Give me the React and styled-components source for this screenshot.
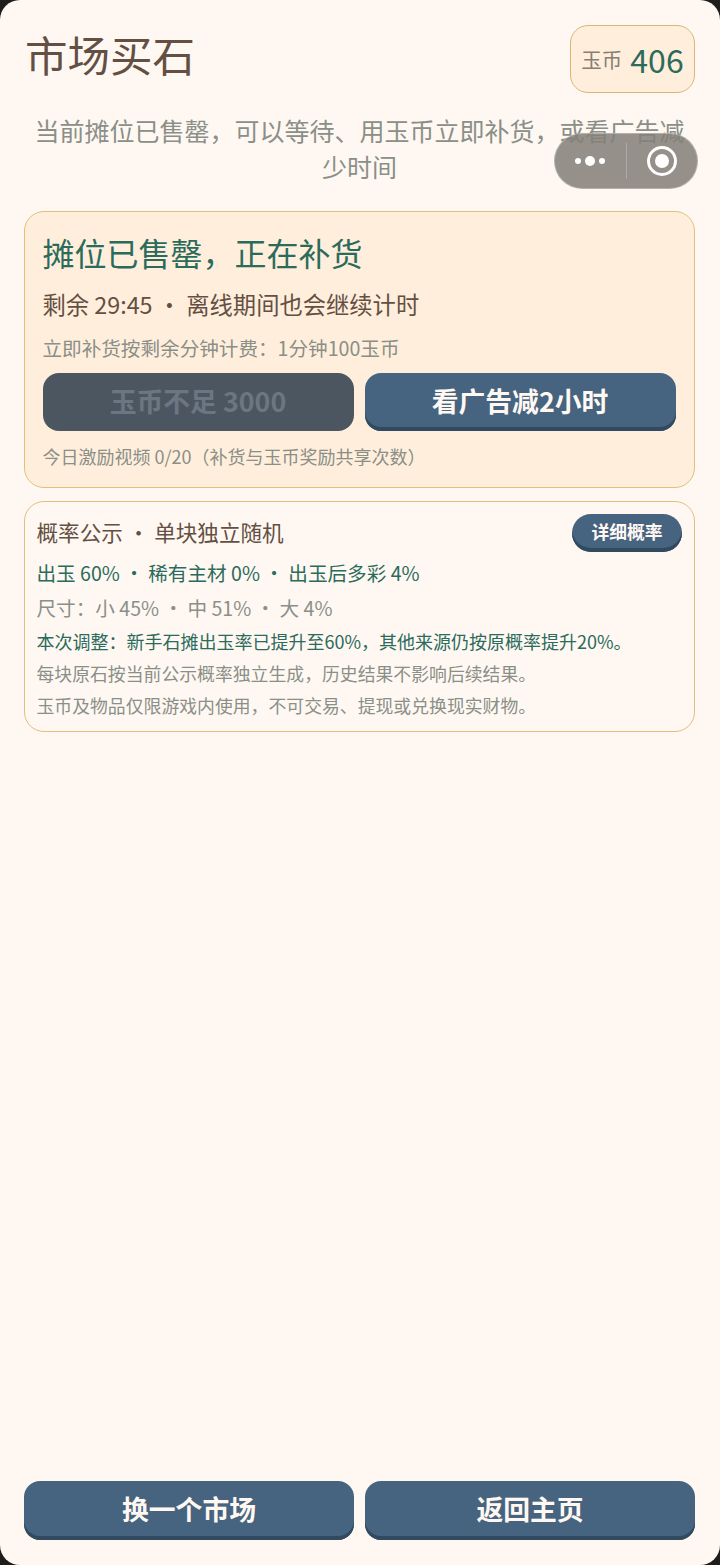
import React from 'react';
import styled, { createGlobalStyle } from 'styled-components';

const Global = createGlobalStyle`
  html, body { margin: 0; padding: 0; background: #1e1d1b; }
  body { font-family: "Noto Sans CJK SC", "Noto Sans", sans-serif; }
  * { box-sizing: border-box; }
`;

const Page = styled.div`
  position: relative;
  width: 720px;
  height: 1565px;
  background: #fff8f2;
  border-radius: 20px;
  padding: 25px 25px 25px 24px;
  display: flex;
  flex-direction: column;
  overflow: hidden;
`;

const Header = styled.div`
  display: flex;
  justify-content: space-between;
  align-items: flex-start;
  height: 68px;
`;

const Title = styled.h1`
  margin: 0 0 0 1px;
  font-size: 42.5px;
  line-height: 58px;
  font-weight: 400;
  color: #644f43;
`;

const Coin = styled.div`
  width: 125px;
  height: 68px;
  border: 1px solid #dab675;
  border-radius: 18px;
  background: #ffeedb;
  display: flex;
  align-items: center;
  justify-content: center;
  gap: 8px;
`;

const CoinLabel = styled.span`
  font-size: 20.5px;
  color: #857f76;
`;

const CoinValue = styled.span`
  font-size: 32px;
  color: #2b6b5c;
`;

const Sub = styled.p`
  margin: 19px 0 27px;
  font-size: 25px;
  line-height: 36px;
  text-align: center;
  color: #8a8f88;
`;

const Card = styled.section`
  border: 1px solid #dfc07c;
  border-radius: 20px;
  background: ${p => p.$warm ? '#ffeedb' : '#fff8f2'};
  padding: ${p => p.$warm ? '16px 18.5px 18px 17.5px' : '12px 12px 12px 11.5px'};
  margin-bottom: 13px;
`;

const CardTitle = styled.h2`
  margin: 0;
  font-size: 32px;
  line-height: 48px;
  font-weight: 400;
  color: #2b6b5c;
`;

const Line = styled.div`
  font-size: ${p => p.$size}px;
  line-height: ${p => p.$height}px;
  color: ${p => p.$color};
  margin-top: ${p => p.$top || 0}px;
  white-space: nowrap;
`;

const Buttons = styled.div`
  display: grid;
  grid-template-columns: 1fr 1fr;
  gap: 11px;
  margin-top: ${p => p.$top || 0}px;
`;

const Button = styled.button`
  height: ${p => p.$tall ? 59 : 58}px;
  border: 0;
  border-radius: 16px;
  padding: 0 0 4px;
  font-family: inherit;
  font-size: 26.8px;
  font-weight: 700;
  color: ${p => p.disabled ? '#6c7682' : '#fff8f2'};
  background: ${p => p.disabled ? '#4c5661' : '#46647f'};
  box-shadow: ${p => p.disabled ? 'none' : 'inset 0 -4px 0 #314a60'};
`;

const ProbHead = styled.div`
  display: flex;
  justify-content: space-between;
  align-items: flex-start;
  height: 38px;
`;

const Pill = styled.button`
  width: 110px;
  height: 38px;
  border: 0;
  border-radius: 19px;
  padding: 0 0 4px;
  font-family: inherit;
  font-size: 17.8px;
  font-weight: 700;
  color: #fff8f2;
  background: #46647f;
  box-shadow: inset 0 -4px 0 #314a60;
`;

const Spacer = styled.div`
  flex: 1;
`;

const Capsule = styled.div`
  position: absolute;
  left: 554px;
  top: 133px;
  width: 144px;
  height: 56px;
  border-radius: 28px;
  background: rgba(132, 128, 121, 0.86);
  border: 1px solid rgba(190, 188, 184, 0.7);
  display: flex;
  align-items: center;
`;

const CapsulePart = styled.div`
  flex: 1;
  height: 36px;
  display: flex;
  align-items: center;
  justify-content: center;
  border-left: ${p => p.$divided ? '1px solid rgba(255,255,255,0.25)' : '0'};
`;

const App = () => (
  <Page>
    <Global />
    <Header>
      <Title>市场买石</Title>
      <Coin>
        <CoinLabel>玉币</CoinLabel>
        <CoinValue>406</CoinValue>
      </Coin>
    </Header>
    <Sub>当前摊位已售罄，可以等待、用玉币立即补货，或看广告减少时间</Sub>

    <Card $warm>
      <CardTitle>摊位已售罄，正在补货</CardTitle>
      <Line $size={23.3} $height={36} $color="#644f43" $top={10}>剩余 29:45 · 离线期间也会继续计时</Line>
      <Line $size={19.6} $height={30} $color="#8a8f88" $top={11}>立即补货按剩余分钟计费：1分钟100玉币</Line>
      <Buttons $top={10}>
        <Button disabled>玉币不足 3000</Button>
        <Button>看广告减2小时</Button>
      </Buttons>
      <Line $size={18} $height={26} $color="#8a8f88" $top={12}>今日激励视频 0/20（补货与玉币奖励共享次数）</Line>
    </Card>

    <Card>
      <ProbHead>
        <Line $size={21.6} $height={36} $color="#644f43">概率公示 · 单块独立随机</Line>
        <Pill>详细概率</Pill>
      </ProbHead>
      <Line $size={19.6} $height={30} $color="#2b6b5c" $top={6}>出玉 60% · 稀有主材 0% · 出玉后多彩 4%</Line>
      <Line $size={19.6} $height={30} $color="#8a8f88" $top={5}>尺寸：小 45% · 中 51% · 大 4%</Line>
      <Line $size={18} $height={28} $color="#2b6b5c" $top={4}>本次调整：新手石摊出玉率已提升至60%，其他来源仍按原概率提升20%。</Line>
      <Line $size={17.85} $height={28} $color="#8a8f88" $top={4}>每块原石按当前公示概率独立生成，历史结果不影响后续结果。</Line>
      <Line $size={17.85} $height={28} $color="#8a8f88" $top={4}>玉币及物品仅限游戏内使用，不可交易、提现或兑换现实财物。</Line>
    </Card>

    <Spacer />

    <Buttons>
      <Button $tall>换一个市场</Button>
      <Button $tall>返回主页</Button>
    </Buttons>

    <Capsule>
      <CapsulePart>
        <svg width="34" height="14" viewBox="0 0 34 14" fill="#fff">
          <circle cx="5" cy="7" r="3" />
          <circle cx="17" cy="7" r="5" />
          <circle cx="29" cy="7" r="3" />
        </svg>
      </CapsulePart>
      <CapsulePart $divided>
        <svg width="32" height="32" viewBox="0 0 32 32" fill="none">
          <circle cx="16" cy="16" r="13.5" stroke="#fff" strokeWidth="3" />
          <circle cx="16" cy="16" r="7" fill="#fff" />
        </svg>
      </CapsulePart>
    </Capsule>
  </Page>
);

export default App;
